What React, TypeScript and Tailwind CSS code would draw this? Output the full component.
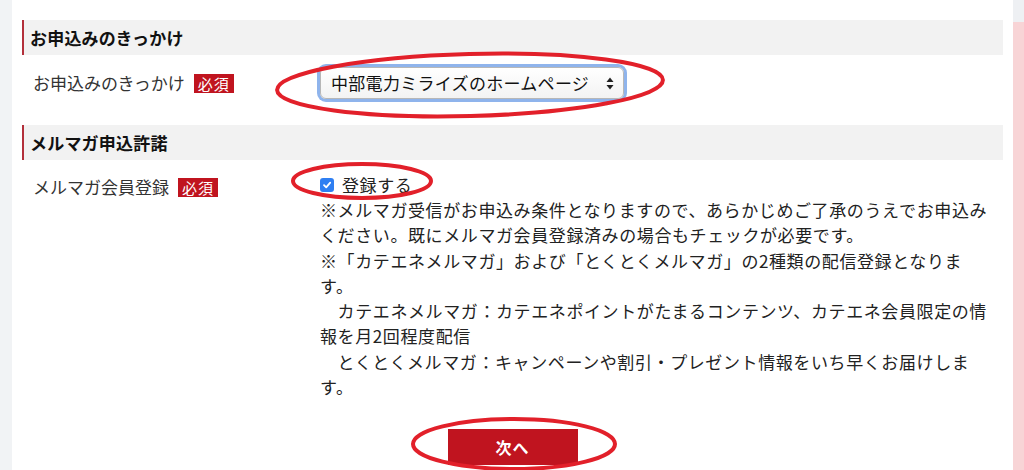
import React from 'react'

const font = { fontFamily: '"Noto Sans CJK JP", "Noto Sans", sans-serif' }
const IDEO_SPACE = '\u3000'

function Required() {
    return (
        <span className="ml-[9px] inline-flex h-[19px] items-center bg-[#c0141f] px-[4px] text-[15px] leading-none tracking-[1px] text-white">
            必須
        </span>
    )
}

function SectionHeader({ title }: { title: string }) {
    return (
        <div className="flex h-[35px] items-center border-l-2 border-[#b3303b] bg-[#f2f2f2] pl-[6px]">
            <h2 className="text-[17px] font-bold tracking-[0.2px] text-[#111]">{title}</h2>
        </div>
    )
}

function Annotations() {
    return (
        <svg className="pointer-events-none absolute left-0 top-0" width="1024" height="470" viewBox="0 0 1024 470">
            <g fill="none" stroke="#e2202a" strokeWidth="4">
                <ellipse cx="470" cy="85" rx="193" ry="31" transform="rotate(-1.5 470 85)" />
                <ellipse cx="362" cy="181" rx="69" ry="17" />
                <ellipse cx="514" cy="444" rx="101" ry="25" />
            </g>
        </svg>
    )
}

export default function App() {
    return (
        <div className="relative flex h-[470px] w-[1024px] overflow-hidden bg-[#f1f3f5]" style={font}>
            <div className="ml-3 w-[1001px] bg-white px-[10px] pt-[20px]">
                <SectionHeader title="お申込みのきっかけ" />

                {/* きっかけ */}
                <div className="grid h-[70px] grid-cols-[298px_1fr] items-start pt-[12px]">
                    <div className="flex h-[32px] items-center pl-[11px] text-[17px] text-[#333]">
                        お申込みのきっかけ
                        <Required />
                    </div>
                    <div>
                        <div className="flex h-[32px] w-[304px] items-center justify-between rounded-[6px] border border-[#b7b7b7] bg-[linear-gradient(#ffffff,#f3f3f3)] pl-[10px] pr-[9px] shadow-[0_0_0_3px_#8fb4ec]">
                            <span className="text-[17px] tracking-[0.3px] text-[#111]">中部電力ミライズのホームページ</span>
                            <svg width="8" height="13" viewBox="0 0 8 13">
                                <path d="M4 0.5 L7.5 5 H0.5 Z" fill="#222" />
                                <path d="M4 12.5 L7.5 8 H0.5 Z" fill="#222" />
                            </svg>
                        </div>
                    </div>
                </div>

                <SectionHeader title="メルマガ申込許諾" />

                {/* メルマガ */}
                <div className="grid grid-cols-[298px_1fr] pt-[12px]">
                    <div className="flex h-[30px] items-center pl-[11px] text-[17px] text-[#333]">
                        メルマガ会員登録
                        <Required />
                    </div>
                    <div>
                        <label className="flex h-[25px] items-center gap-[8px]">
                            <span className="flex h-[14px] w-[14px] items-center justify-center rounded-[3px] bg-[#2f7ff2]">
                                <svg width="10" height="10" viewBox="0 0 10 10">
                                    <path d="M2 5.2 L4.2 7.4 L8.2 2.6" fill="none" stroke="white" strokeWidth="1.8" strokeLinecap="round" strokeLinejoin="round" />
                                </svg>
                            </span>
                            <span className="text-[17px] tracking-[0.6px] text-[#222]">登録する</span>
                        </label>
                        <p className="w-[675px] text-[17px] leading-[25.3px] tracking-[0.6px] text-[#222]">
                            ※メルマガ受信がお申込み条件となりますので、あらかじめご了承のうえでお申込みください。既にメルマガ会員登録済みの場合もチェックが必要です。
                            <br />
                            ※「カテエネメルマガ」および「とくとくメルマガ」の2種類の配信登録となります。
                            <br />
                            {IDEO_SPACE}カテエネメルマガ：カテエネポイントがたまるコンテンツ、カテエネ会員限定の情報を月2回程度配信
                            <br />
                            {IDEO_SPACE}とくとくメルマガ：キャンペーンや割引・プレゼント情報をいち早くお届けします。
                        </p>
                    </div>
                </div>

                <div className="flex justify-center pt-[30px]">
                    <button className="h-[36px] w-[130px] bg-[#c0141f] text-[16px] font-bold tracking-[1px] text-white">
                        次へ
                    </button>
                </div>
            </div>
            <div className="flex w-[11px] flex-col">
                <div className="h-[22px] bg-[#eef0f3]" />
                <div className="flex-1 bg-[#f8d4d6]" />
            </div>
            <Annotations />
        </div>
    )
}
